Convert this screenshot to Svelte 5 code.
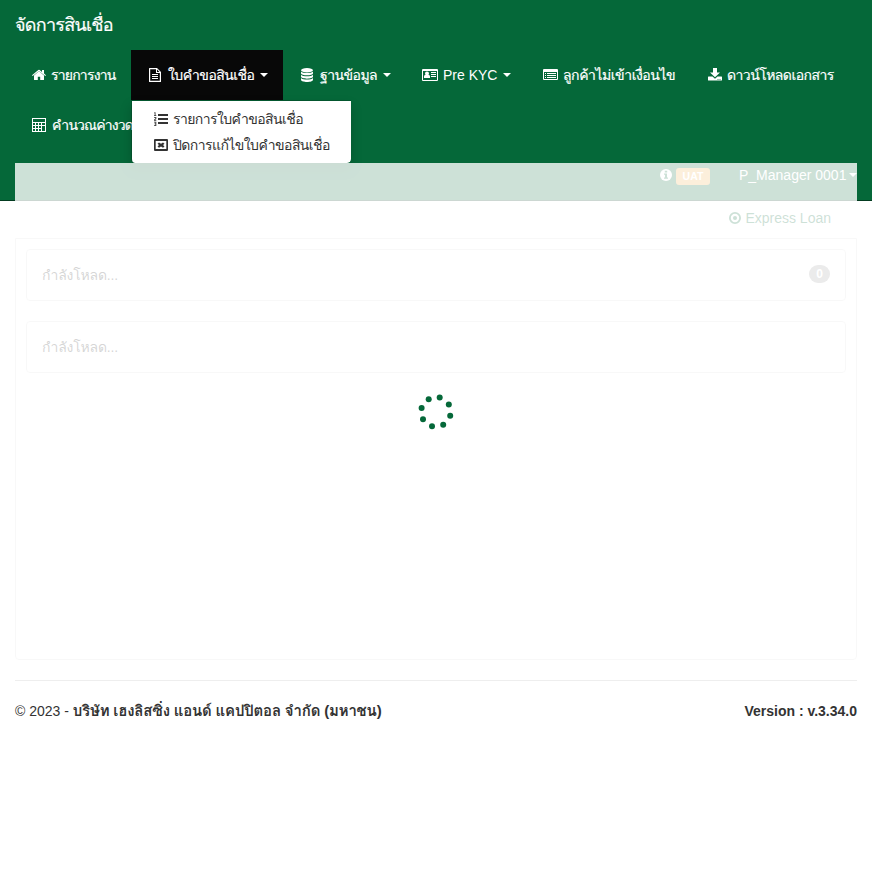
<script>
  const items = [
    { icon: 'home', label: 'รายการงาน', width: 116, text: 65, spacing: -0.8 },
    { icon: 'file', label: 'ใบคำขอสินเชื่อ', width: 152, text: 87, spacing: -0.53, caret: true, active: true },
    { icon: 'database', label: 'ฐานข้อมูล', width: 122, text: 58, spacing: -0.55, caret: true },
    { icon: 'card', label: 'Pre KYC', width: 121, text: 55, spacing: 0, caret: true },
    { icon: 'list', label: 'ลูกค้าไม่เข้าเงื่อนไข', width: 165, text: 113, spacing: -0.46 },
    { icon: 'download', label: 'ดาวน์โหลดเอกสาร', width: 159, text: 108, spacing: -0.55 },
    { icon: 'calc', label: 'คำนวณค่างวด', width: 132, text: 81, spacing: -0.85 }
  ];
  const dots = [[39.7, 17.5], [48.8, 24.6], [50.2, 35.8], [43.2, 44.7], [32, 46.2], [23, 39.3], [21.6, 28], [28.7, 19.2]];
</script>

{#snippet icon(name)}
  <svg class="icon" viewBox="0 0 18 14" aria-hidden="true">
    {#if name === 'home'}
      <path d="M9 3.2 4 7.4v4.1q0 .5.5.5h3.3V8.700h2.400V12h3.300q.5 0 .5-.5V7.400zM2 7.200l.7.800L9 2.900l6.300 5.100.7-.8-2-1.700V2h-2v2L9.700 1.900q-.7-.5-1.400 0z" />
    {:else if name === 'file'}
      <path fill-rule="evenodd" d="M3.500 0h7.500l4 4V13.500q0 .5-.5.500h-11Q3 14 3 13.500V.5Q3 0 3.500 0zM4.200 1.200v11.600h9.600V5H10V1.200zM11 1.500V4h2.500zM6 6h6v1H6zm0 2h6v1H6zm0 2h6v1H6z" />
    {:else if name === 'database'}
      <ellipse cx="9" cy="2.200" rx="6" ry="2.200" />
      <path d="M3 3.500c2 2 10 2 12 0v1.800c0 2.700-12 2.700-12 0zM3 6.800c2 2 10 2 12 0v1.800c0 2.700-12 2.700-12 0zM3 10c2 2 10 2 12 0v1.700c0 3-12 3-12 0z" />
    {:else if name === 'card'}
      <path fill-rule="evenodd" d="M2 1h15q1 0 1 1v10q0 1-1 1H3q-1 0-1-1V2q0-1 1-1zm1 2v9h14V3z" />
      <path d="M4 10V8.500Q4 7 5 7h4q1 0 1 1.500V10zM11 4h5v1h-5zm0 2h5v1h-5zm0 2h5v1h-5z" />
      <circle cx="7" cy="5.500" r="2" />
    {:else if name === 'list'}
      <path fill-rule="evenodd" d="M2 1h14q1 0 1 1v9q0 1-1 1H3q-1 0-1-1V2q0-1 1-1zm1 3v7h13V4z" />
      <path d="M4 5h1v1H4zm2 0h9v1H6zM4 7h1v1H4zm2 0h9v1H6zM4 9h1v1H4zm2 0h9v1H6z" />
    {:else if name === 'download'}
      <path fill-rule="evenodd" d="M7 0h4v4.500h3L9 9.200 4 4.500h3zM2.500 8.500h4L9 10.800l2.500-2.300h4q.5 0 .5.500v3q0 .5-.5.500h-13q-.5 0-.5-.5V9q0-.5.5-.5zm9 2.500v.8h1V11zm2 0v.8h1V11z" />
    {:else if name === 'calc'}
      <path fill-rule="evenodd" d="M2 0h14v14H2zM3 1v3h12V1zm0 4v2h2V5zm3 0v2h2V5zm3 0v2h2V5zm3 0v2h3V5zM3 8v2h2V8zm3 0v2h2V8zm3 0v2h2V8zm-6 3v2h2v-2zm3 0v2h2v-2zm3 0v2h2v-2zm3-3v5h3V8z" />
    {:else if name === 'ordered'}
      <path d="M6 2h10v2H6zm0 4h10v2H6zm0 4h10v2H6zM2.500.200h1v3h.8V4H2v-.8h.7V1.300H2zM2 5h2.300v2L3 8h1.300v.8H2V7.700l1.400-1.200v-.7H2zm0 4.800h2.300V14H2v-.8h1.400v-.9H2.500v-.8h.9v-.9H2z" />
    {:else if name === 'closed'}
      <path fill-rule="evenodd" d="M3 1h12q1 0 1 1v10q0 1-1 1H3q-1 0-1-1V2q0-1 1-1zm.7 2v8h10.600V3z" />
      <path d="m5.500 5.700 1.500-1.300L9 5.700l2-1.300 1.500 1.300L11 7l1.500 1.400L11 9.700 9 8.400 7 9.700 5.500 8.400 7 7z" />
    {/if}
  </svg>
{/snippet}

<div class="page">
  <header>
    <div class="brand"><span>จัดการสินเชื่อ</span></div>
    <nav>
      {#each items as item}
        <a class:active={item.active} class:latin={item.icon === 'card'} class:tight={item.icon === 'home' || item.icon === 'download'} style:width="{item.width}px">
          {@render icon(item.icon)}
          <span class="label" style:width="{item.text}px" style:letter-spacing="{item.spacing}px">{item.label}</span>
          {#if item.caret}<i class="caret"></i>{/if}
        </a>
      {/each}
    </nav>
    <div class="user">
      <svg class="info" viewBox="0 0 12 12"><circle cx="6" cy="6" r="6" fill="#fff" /><path fill="#056839" d="M4.800 1.800h2.400v1.700H4.800zM4 4.500h3v4h1v1.300H4V8.500h1V5.800H4z" /></svg>
      <b class="uat">UAT</b>
      <span class="name">P_Manager 0001</span><i class="caret"></i>
    </div>
  </header>
  <ul class="menu">
    <li>{@render icon('ordered')}<span>รายการใบคำขอสินเชื่อ</span></li>
    <li>{@render icon('closed')}<span>ปิดการแก้ไขใบคำขอสินเชื่อ</span></li>
  </ul>
  <main>
    <div class="product">
      <svg viewBox="0 0 12 12"><circle cx="6" cy="6" r="5.100" fill="none" stroke="#056839" stroke-width="1.800" /><circle cx="6" cy="6" r="2" fill="#056839" /></svg>
      <span>Express Loan</span>
    </div>
    <section>
      <div class="well"><span>กำลังโหลด...</span><b class="badge">0</b></div>
      <div class="well"><span>กำลังโหลด...</span></div>
    </section>
    <footer>
      <span>© 2023 - <b class="company">บริษัท เฮงลิสซิ่ง แอนด์ แคปปิตอล จำกัด (มหาชน)</b></span>
      <b>Version : v.3.34.0</b>
    </footer>
  </main>
  <div class="overlay">
    <svg viewBox="0 0 72 64">
      {#each dots as [x, y]}<circle cx={x} cy={y} r="3" />{/each}
    </svg>
  </div>
</div>

<style>
  .page { position: relative; height: 881px; font: 14px/20px "Liberation Sans", Tahoma, Loma, Waree, "Noto Sans Thai Looped", "Noto Looped Thai", "Leelawadee UI", Garuda, Umpush, Sarabun, "Droid Sans Thai", FreeSans, FreeSerif, sans-serif; color: #333; background: #fff; overflow: hidden; }
  header { box-sizing: border-box; height: 201px; background: #056839; border-bottom: 1px solid #033b20; color: #fff; }
  .brand { height: 50px; padding: 15px; box-sizing: border-box; font-size: 18px; letter-spacing: -.75px; -webkit-text-stroke: .2px; }
  nav { display: flex; flex-wrap: wrap; height: 100px; padding: 0 15px; }
  nav a { box-sizing: border-box; height: 50px; display: flex; align-items: center; padding: 0 15px; }
  nav a.active { background: #080808; }
  .icon { width: 18px; height: 14px; margin-right: 4px; flex: none; fill: currentColor; }
  .label { white-space: nowrap; flex: none; -webkit-text-stroke: .2px; }
  .tight .icon { margin-right: 3px; }
  .latin .icon { margin-right: 5px; }
  .latin .label { -webkit-text-stroke: 0; }
  .caret { width: 0; height: 0; flex: none; border: 4px solid transparent; border-top-color: currentColor; border-bottom: 0; margin-left: 5px; }
  .user { display: flex; align-items: center; height: 20px; margin-top: 15px; padding-right: 15px; justify-content: flex-end; }
  .info { width: 12px; height: 12px; margin-right: 4px; }
  .uat { width: 34px; height: 17px; margin: 2px 29px 0 0; border-radius: 3px; background: #f0ad4e; font-size: 10.500px; line-height: 17px; text-align: center; }
  .user .caret { margin-left: 2px; }
  .name { width: 108px; white-space: nowrap; }
  .menu { position: absolute; left: 131px; top: 100px; width: 220px; height: 63px; box-sizing: border-box; list-style: none; margin: 0; padding: 5px 0 0 20px; background: #fff; border: 1px solid rgba(0,0,0,.15); border-width: 1px 0 0 1px; background-clip: padding-box; border-radius: 0 0 4px 4px; box-shadow: 0 6px 12px rgba(0,0,0,.175); }
  .menu li { display: flex; align-items: center; height: 26px; white-space: nowrap; letter-spacing: -.57px; }
  .menu .icon { margin-right: 3px; }
  main { padding: 0 15px; }
  .product { height: 37px; padding: 0 26px 4px 0; display: flex; align-items: center; justify-content: flex-end; color: #056839; box-sizing: border-box; }
  .product svg { width: 12px; height: 12px; margin-right: 4px; }
  section { height: 422px; box-sizing: border-box; border: 1px solid #ddd; border-radius: 0 0 4px 4px; padding: 10px; }
  .well { box-sizing: border-box; height: 52px; margin-bottom: 20px; padding: 0 15px; border: 1px solid #ddd; border-radius: 4px; display: flex; align-items: center; justify-content: space-between; letter-spacing: -.2px; }
  .badge { width: 21px; height: 18px; line-height: 18px; text-align: center; border-radius: 9px; background: #999; color: #fff; font-size: 12px; margin-top: -2px; }
  footer { margin-top: 20px; padding-top: 20px; border-top: 1px solid #eee; display: flex; justify-content: space-between; }
  .company { font-size: 15px; letter-spacing: -.2px; }
  .overlay { position: absolute; left: 15px; top: 163px; width: 842px; height: 497px; background: rgba(255,255,255,.8); display: flex; align-items: center; justify-content: center; }
  .overlay svg { width: 72px; height: 64px; fill: #056839; }
</style>
